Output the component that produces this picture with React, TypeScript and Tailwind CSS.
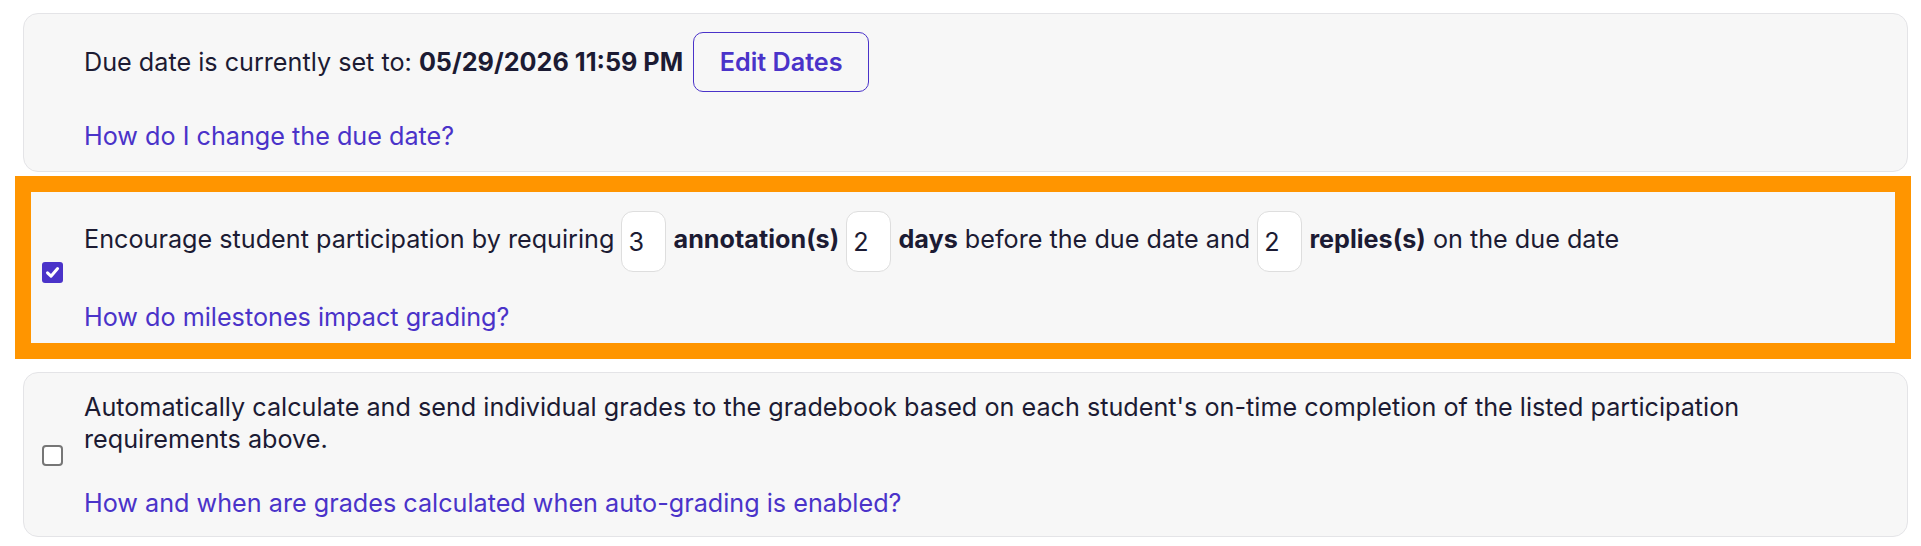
import { ReactNode } from "react";

const Checkbox = (props: { checked?: boolean }) => {
  if (props.checked) {
    return (
      <span className="flex h-[21px] w-[21px] shrink-0 items-center justify-center rounded-[3px] bg-[#4a33c9]">
        <svg width="15" height="15" viewBox="0 0 15 15" fill="none">
          <path
            d="M2.5 7.8 L6 11.2 L12.6 3.6"
            stroke="white"
            strokeWidth="3"
            strokeLinecap="round"
            strokeLinejoin="round"
          />
        </svg>
      </span>
    );
  }
  return (
    <span className="block h-[21px] w-[21px] shrink-0 rounded-[4px] border-2 border-[#767676] bg-white"></span>
  );
};

const NumberBox = (props: { value: string }) => (
  <input
    type="text"
    defaultValue={props.value}
    className="inline-block h-[61px] w-[45px] rounded-[12px] border border-[#dedede] bg-white pl-[6px] align-middle text-[25.2px] text-[#1c1b33] outline-none"
  />
);

const HelpLink = (props: { children: ReactNode; className?: string }) => (
  <a href="#" className={"block text-[#4a33c9] " + (props.className ?? "")}>
    {props.children}
  </a>
);

export default function App() {
  return (
    <div className="min-h-screen bg-white pt-[13px] font-['Inter',sans-serif] text-[25.2px] leading-[32px] text-[#1c1b33]">
      {/* due date */}
      <div className="ml-[23px] mr-[13px] rounded-[15px] border border-[#e4e4e7] bg-[#f7f7f7] px-[18px] pt-[18px] pb-[19px]">
        <div className="pl-[42px]">
          <div className="flex h-[60px] items-center">
            <span>Due date is currently set to:&nbsp;</span>
            <span className="font-bold">05/29/2026 11:59 PM</span>
            <button className="ml-[10px] h-[60px] w-[176px] rounded-[10px] border border-[#4a33c9] font-semibold text-[#4a33c9]">
              Edit Dates
            </button>
          </div>
          <HelpLink className="mt-[28px]">How do I change the due date?</HelpLink>
        </div>
      </div>

      {/* milestones (highlighted) */}
      <div className="mt-[4px] ml-[15px] mr-[10px] flex items-center border-[16px] border-[#ff9500] bg-[#f7f7f7] pl-[11px] pt-[19px] pb-[10px]">
        <Checkbox checked />
        <div className="ml-[21px]">
          <div className="flex h-[61px] items-center">
            <p>
              Encourage student participation by requiring <NumberBox value="3" />{" "}
              <b>annotation(s)</b> <NumberBox value="2" /> <b>days</b> before the due
              date and <NumberBox value="2" /> <b>replies(s)</b> on the due date
            </p>
          </div>
          <HelpLink className="mt-[29px]">How do milestones impact grading?</HelpLink>
        </div>
      </div>

      {/* auto grading */}
      <div className="mt-[13px] ml-[23px] mr-[13px] flex items-center rounded-[15px] border border-[#e4e4e7] bg-[#f7f7f7] px-[18px] pt-[18px] pb-[17px]">
        <Checkbox />
        <div className="ml-[21px]">
          <p>
            Automatically calculate and send individual grades to the gradebook based on
            each student's on-time completion of the listed participation requirements
            above.
          </p>
          <HelpLink className="mt-[32px]">
            How and when are grades calculated when auto-grading is enabled?
          </HelpLink>
        </div>
      </div>
    </div>
  );
}
